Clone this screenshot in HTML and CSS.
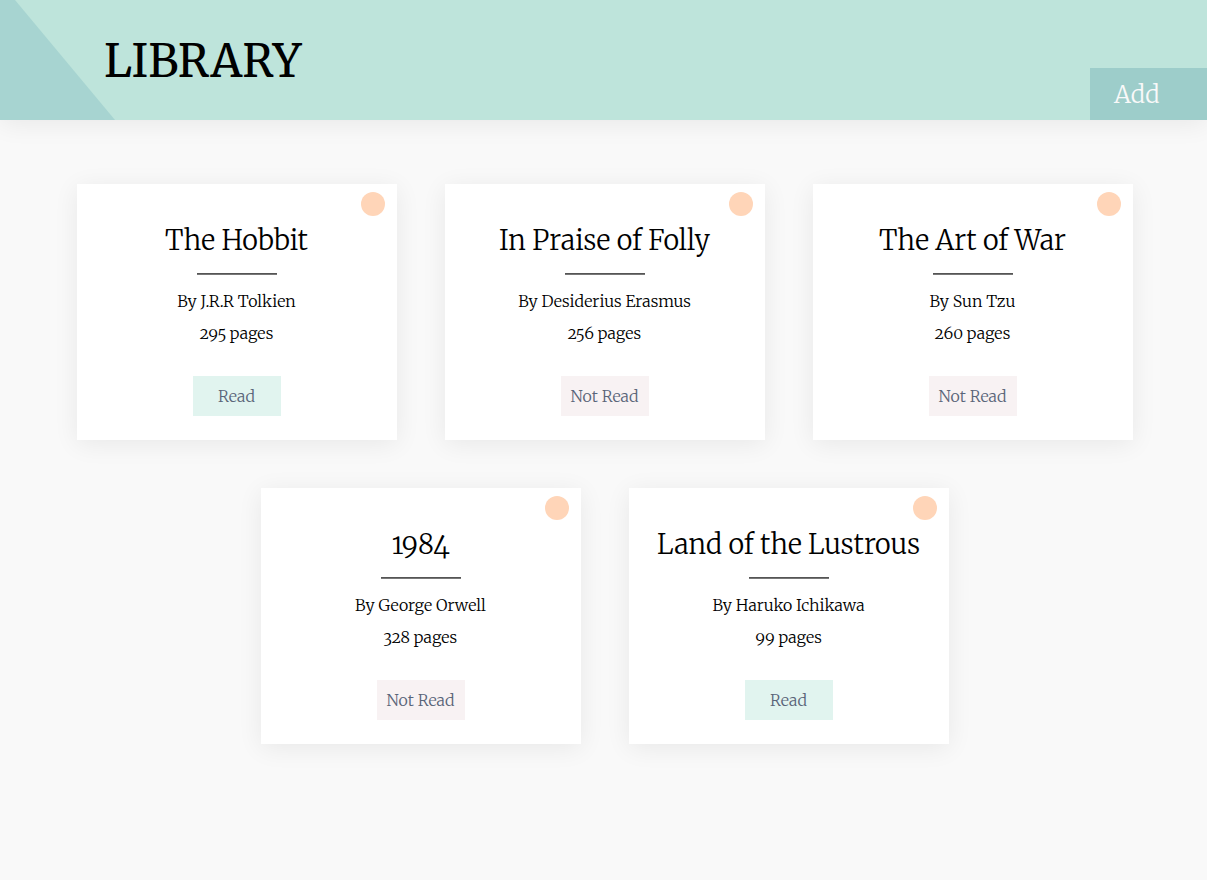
FILE: index.html
```html
<!DOCTYPE html>
<html lang="en">
<head>
<meta charset="utf-8">
<meta name="viewport" content="width=device-width, initial-scale=1">
<title>Library</title>
<link rel="stylesheet" href="styles.css">
</head>
<body>
<header class="header">
  <h1 class="title">LIBRARY</h1>
  <button class="add" type="button">Add</button>
</header>
<main class="books">
  <article class="card">
    <button class="remove" type="button" aria-label="Remove The Hobbit"></button>
    <h2 class="name">The Hobbit</h2>
    <hr class="rule">
    <p class="detail">By J.R.R Tolkien</p>
    <p class="detail">295 pages</p>
    <button class="status read" type="button">Read</button>
  </article>
  <article class="card">
    <button class="remove" type="button" aria-label="Remove In Praise of Folly"></button>
    <h2 class="name">In Praise of Folly</h2>
    <hr class="rule">
    <p class="detail">By Desiderius Erasmus</p>
    <p class="detail">256 pages</p>
    <button class="status" type="button">Not Read</button>
  </article>
  <article class="card">
    <button class="remove" type="button" aria-label="Remove The Art of War"></button>
    <h2 class="name">The Art of War</h2>
    <hr class="rule">
    <p class="detail">By Sun Tzu</p>
    <p class="detail">260 pages</p>
    <button class="status" type="button">Not Read</button>
  </article>
  <article class="card">
    <button class="remove" type="button" aria-label="Remove 1984"></button>
    <h2 class="name">1984</h2>
    <hr class="rule">
    <p class="detail">By George Orwell</p>
    <p class="detail">328 pages</p>
    <button class="status" type="button">Not Read</button>
  </article>
  <article class="card">
    <button class="remove" type="button" aria-label="Remove Land of the Lustrous"></button>
    <h2 class="name">Land of the Lustrous</h2>
    <hr class="rule">
    <p class="detail">By Haruko Ichikawa</p>
    <p class="detail">99 pages</p>
    <button class="status read" type="button">Read</button>
  </article>
</main>
</body>
</html>
```

FILE: styles.css
```css
* {
  box-sizing: border-box;
}

body {
  margin: 0;
  min-height: 100vh;
  background: #f9f9f9;
  color: #000;
  font-family: Merriweather, "DejaVu Serif", serif;
  font-weight: 300;
  font-optical-sizing: none;
  font-variant-numeric: oldstyle-nums;
}

button {
  border: 0;
  font: inherit;
  cursor: pointer;
}

.header {
  position: relative;
  display: flex;
  justify-content: space-between;
  height: 120px;
  padding-left: 104px;
  background: #bee4db;
  box-shadow: 0 4px 24px rgba(0, 0, 0, 0.07);
}

.header::before {
  content: "";
  position: absolute;
  top: 0;
  left: 0;
  width: 115px;
  height: 100%;
  background: #a7d4d1;
  clip-path: polygon(0 0, 15px 0, 100% 100%, 0 100%);
}

.title {
  position: relative;
  margin: 0;
  font-size: 45px;
  font-weight: 400;
  line-height: 122px;
}

.add {
  align-self: flex-end;
  width: 117px;
  height: 52px;
  padding: 0 24px;
  background: #9dcdca;
  color: #f9f9f9;
  font-size: 24px;
  text-align: left;
}

.books {
  display: flex;
  flex-wrap: wrap;
  justify-content: center;
  gap: 48px;
  padding: 64px 46px 64px 48px;
}

.card {
  position: relative;
  display: flex;
  flex-direction: column;
  align-items: center;
  width: 320px;
  padding: 32px 8px 24px;
  background: #fff;
  box-shadow: 0 4px 24px rgba(0, 0, 0, 0.07);
}

.remove {
  position: absolute;
  top: 8px;
  right: 12px;
  width: 24px;
  height: 24px;
  padding: 0;
  border-radius: 50%;
  background: #ffd5b8;
}

.name {
  margin: 0;
  font-size: 27px;
  font-weight: 300;
  line-height: 49px;
}

.rule {
  width: 80px;
  height: 2px;
  margin: 8px 0 10px;
  border: 0;
  background: linear-gradient(#555 50%, #777 50%);
}

.detail {
  margin: 0;
  font-size: 16px;
  line-height: 32px;
}

.status {
  width: 88px;
  height: 40px;
  margin-top: 27px;
  padding: 0;
  background: #f8f2f3;
  color: #5a6579;
  font-size: 16px;
}

.read {
  background: #e1f4ef;
}
```
